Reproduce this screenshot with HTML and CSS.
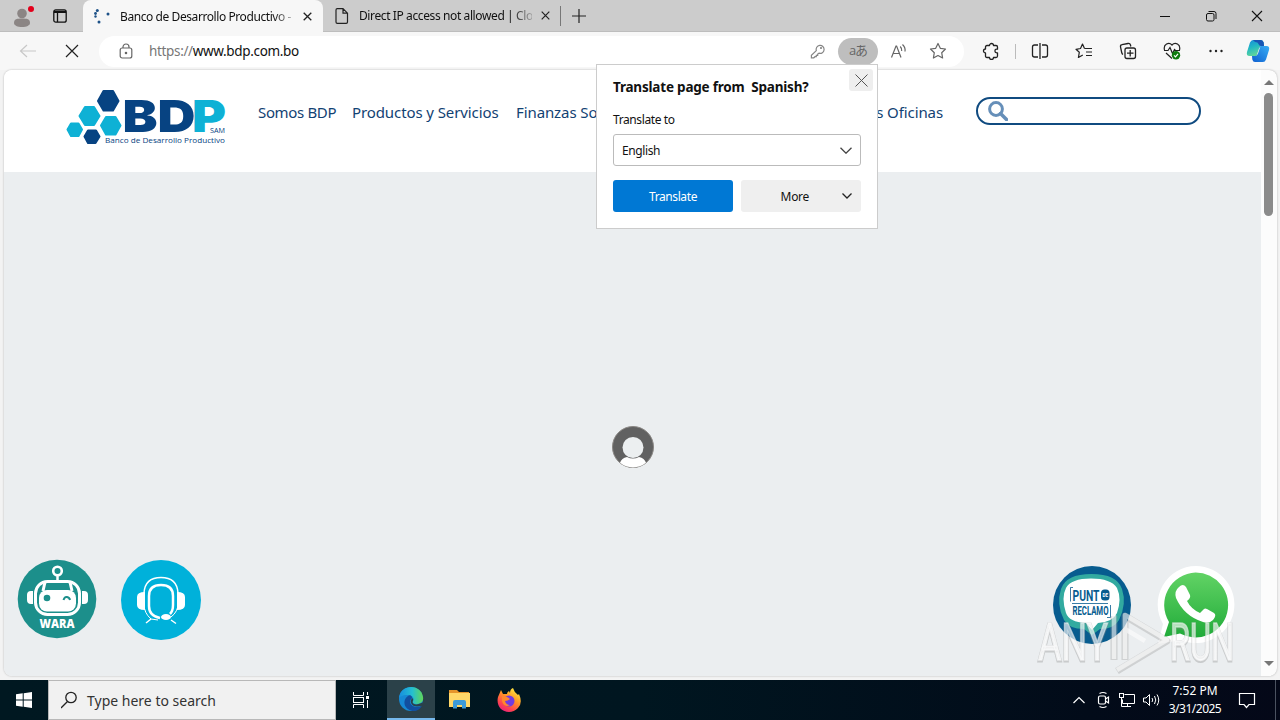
FILE: index.html
```html
<!DOCTYPE html>
<html lang="en">
<head>
<meta charset="utf-8">
<title>Banco de Desarrollo Productivo</title>
<link rel="stylesheet" href="styles.css">
</head>
<body>
<div class="desktop">
  <div class="tabstrip">
    <div class="tab-actions">
      <svg class="profile" width="26" height="28" viewBox="0 0 26 28"><circle cx="12" cy="12.500" r="4.800" fill="#8b8584"/><path d="M4 22c0-4 3-4.500 8-4.500s8 .5 8 4.500c0 2.500-3.500 4-8 4s-8-1.500-8-4z" fill="#8b8584"/><circle cx="21" cy="8" r="3" fill="#e3001b"/></svg>
      <svg width="14" height="14" viewBox="0 0 14 14" fill="none" stroke="#111" stroke-width="1.300"><rect x=".8" y=".8" width="12.400" height="12.400" rx="2"/><path d="M1 2.500h12M4.500 3v10" /><path d="M1 3h12" stroke-width="2"/></svg>
    </div>
    <div class="tab tab-active">
      <svg width="18" height="16" viewBox="0 0 18 16" fill="#1e5288"><circle cx="4.300" cy="2.500" r="1.500"/><circle cx="2.500" cy="5.500" r="1.400"/><circle cx="2.500" cy="8.500" r="1.200"/><circle cx="6" cy="14" r="1.500"/><circle cx="15" cy="6" r="1.500"/></svg>
      <span class="tab-title title-one">Banco de Desarrollo Productivo - </span>
      <svg class="tab-close" width="9" height="9" viewBox="0 0 9 9"><path d="M.7.700l7.600 7.600M8.300.700L.7 8.300" stroke="#222" stroke-width="1.300"/></svg>
    </div>
    <div class="tab">
      <svg width="14" height="16" viewBox="0 0 14 16" fill="none" stroke="#222" stroke-width="1.200"><path d="M1 2q0-1.300 1.300-1.300H8l4.500 4.500V14q0 1.300-1.300 1.300H2.300Q1 15.300 1 14zM8 .7v4.500h4.500"/></svg>
      <span class="tab-title title-two">Direct IP access not allowed | Clo</span>
      <svg class="tab-close" width="9" height="9" viewBox="0 0 9 9"><path d="M.7.700l7.600 7.600M8.300.700L.7 8.300" stroke="#222" stroke-width="1.200"/></svg>
    </div>
    <svg class="plus" width="14" height="14" viewBox="0 0 14 14"><path d="M7 0v14M0 7h14" stroke="#222" stroke-width="1.200"/></svg>
    <div class="window-buttons">
      <svg width="46" height="32" viewBox="0 0 46 32"><path d="M18 16.500h10" stroke="#111"/></svg>
      <svg width="46" height="32" viewBox="0 0 46 32" fill="none" stroke="#111"><rect x="18.500" y="13.500" width="7.500" height="7.500" rx="1.500"/><path d="M20.500 11.500H26q2 0 2 2V19"/></svg>
      <svg width="46" height="32" viewBox="0 0 46 32" stroke="#111" stroke-width="1.100"><path d="M18 11l10 10M28 11L18 21"/></svg>
    </div>
  </div>

  <div class="toolbar">
    <div class="tool"><svg width="18" height="14" viewBox="0 0 18 14" fill="none" stroke="#c8c8c8" stroke-width="1.200"><path d="M17 7H1.500M8 1L1.500 7 8 13"/></svg></div>
    <div class="tool"><svg width="14" height="14" viewBox="0 0 14 14" stroke="#222" stroke-width="1.200"><path d="M1 1l12 12M13 1L1 13"/></svg></div>
    <div class="address">
      <svg class="lock" width="14" height="16" viewBox="0 0 14 16" fill="none" stroke="#666" stroke-width="1.200"><rect x="1.200" y="5" width="11.600" height="10" rx="2"/><path d="M4 5V4a3 3 0 0 1 6 0v1"/><circle cx="7" cy="10" r=".7" fill="#666"/></svg>
      <span class="url"><span class="scheme">https://</span>www.bdp.com.bo</span>
      <div class="address-tools">
        <div class="mini"><svg width="16" height="16" viewBox="0 0 16 16" fill="none" stroke="#858585" stroke-width="1.200"><path d="M6.300 7.600A4 4 0 1 1 9 10.200L7.700 11v1.300H6.300v1.400H5L3.800 14.800H1.400v-2.500z"/><circle cx="11" cy="5" r=".5"/></svg></div>
        <div class="mini translate">aあ</div>
        <div class="mini"><svg width="18" height="16" viewBox="0 0 18 16" fill="none" stroke="#666" stroke-width="1.200"><path d="M2.500 14.500L7 3h.6L12 14.500M4 10.500h6.500M11.200 3.500q2 2 1.500 4.500M13.500 1.500q3.200 3 2.500 7"/></svg></div>
        <div class="mini"><svg width="18" height="18" viewBox="0 0 18 18" fill="none" stroke="#666" stroke-width="1.200" stroke-linejoin="round"><path d="M9 1.500l2.300 4.800 5.200.7-3.800 3.700.9 5.300L9 13.500 4.400 16l.9-5.300L1.500 7l5.200-.7z"/></svg></div>
      </div>
    </div>
    <div class="tool extension"><svg width="18" height="18" viewBox="0 0 18 18" fill="none" stroke="#222" stroke-width="1.300" stroke-linejoin="round"><path d="M5 3.500h2.500a2 2 0 0 1 4 0H14q1.500 0 1.500 1.500v2.200h-.8a1.800 1.800 0 0 0 0 3.600h.8V14q0 1.500-1.500 1.500h-2.500a2 2 0 0 1-4 0H5q-1.500 0-1.500-1.500v-3a2 2 0 0 1 0-4V5q0-1.500 1.500-1.500z"/></svg></div>
    <div class="divider"></div>
    <div class="tool"><svg width="18" height="16" viewBox="0 0 18 16" fill="none" stroke="#222" stroke-width="1.300"><path d="M7 2H3.500Q1.500 2 1.500 4v8q0 2 2 2H7M11 2h3.500q2 0 2 2v8q0 2-2 2H11M9 0v16"/></svg></div>
    <div class="tool"><svg width="18" height="16" viewBox="0 0 18 16" fill="none" stroke="#222" stroke-width="1.200" stroke-linejoin="round"><path d="M9.500 5.500L7.500 1 5.500 5.500l-4.500.8 3.300 3-.9 5.200L7.800 12M9.500 5.500H17M11 9h6M11 12.500h6"/></svg></div>
    <div class="tool"><svg width="18" height="18" viewBox="0 0 18 18" fill="none" stroke="#222" stroke-width="1.300"><path d="M4 12.500Q3 12 2.700 10.500L1.500 5q-.3-2 1.500-2.300l6-1.200q2-.3 2.500 1.500l.3 1.500"/><rect x="6" y="6" width="10.500" height="10.500" rx="2"/><path d="M11.200 8v6.500M8 11.200h6.500"/></svg></div>
    <div class="tool"><svg width="18" height="18" viewBox="0 0 18 18" fill="none" stroke="#222" stroke-width="1.200"><path d="M1.500 8C0 2 6-.5 9 3c3-3.500 9-1 7.500 5M1 8.500h4l2-3 2.500 6 2-4 1 1H17M3 11l6 5.500"/><circle cx="13" cy="13.300" r="4.200" fill="#0f7b0f" stroke="none"/><path d="M11 13.300l1.500 1.500 2.500-3" stroke="#fff"/></svg></div>
    <div class="tool"><svg width="16" height="4" viewBox="0 0 16 4" fill="#222"><circle cx="2.500" cy="2" r="1.200"/><circle cx="8" cy="2" r="1.200"/><circle cx="13.500" cy="2" r="1.200"/></svg></div>
    <div class="tool copilot"><svg width="26" height="24" viewBox="0 0 26 24"><defs><linearGradient id="ca" x1="0" y1="0" x2=".4" y2="1"><stop stop-color="#1689dc"/><stop offset=".5" stop-color="#22b8c3"/><stop offset="1" stop-color="#62d79a"/></linearGradient><linearGradient id="cb" x1="1" y1="0" x2="0" y2="1"><stop stop-color="#37aef5"/><stop offset="1" stop-color="#0f5fd0"/></linearGradient></defs><path d="M8 1h8q2 0 2.700 2.500L19 7h-2q-2 0-3 2.500L11.500 17H4.500Q1 17 2 13L5 3.500Q6 1 8 1z" fill="url(#ca)"/><path d="M18 23h-8q-2 0-2.700-2.500L7 17h3q2 0 3-2.500L15.500 7h6Q25 7 24 11l-3 9.500Q20 23 18 23z" fill="url(#cb)"/><path d="M8 1h8q2 0 2.700 2.500L19 7h-3q-2 0-2.500-2T10 3z" fill="#1855b4"/></svg></div>
  </div>

  <div class="viewport">
    <div class="page">
      <header class="site-header">
        <svg class="logo" width="162" height="58" viewBox="0 0 162 58">
          <g stroke-linejoin="round" stroke-width="2">
          <path d="M37.500 2h9.500l5.500 10L47 21.500H37.500L32 12z" fill="#074382" stroke="#074382"/>
          <path d="M19 18h9l5.500 9-5.500 9h-9l-5.500-9z" fill="#0eb1d5" stroke="#0eb1d5"/>
          <path d="M40 28h9.500l5 8.500-5 9H40l-5-9z" fill="#0eb1d5" stroke="#0eb1d5"/>
          <path d="M5 34.500h7.500l3.500 6-3.500 6.500H5l-3.500-6.500z" fill="#0eb1d5" stroke="#0eb1d5"/>
          <path d="M22 41.500h8l3.500 6-4 6.500H22l-3.500-6.500z" fill="#074382" stroke="#074382"/></g>
          <g class="logo-word"><text x="56.500" y="43" textLength="73" lengthAdjust="spacingAndGlyphs" fill="#074382">BD</text><text x="126" y="43" textLength="34" lengthAdjust="spacingAndGlyphs" fill="#0eb1d5">P</text></g>
          <text class="logo-small" x="144" y="43.500" textLength="15" lengthAdjust="spacingAndGlyphs">SAM</text>
          <text class="logo-sub" x="39" y="54" textLength="120" lengthAdjust="spacingAndGlyphs">Banco de Desarrollo Productivo</text>
        </svg>
        <nav class="site-nav"><span class="n1">Somos BDP</span><span class="n2">Productos y Servicios</span><span class="n3">Finanzas Sostenibles</span><span class="n4">Nuestras Oficinas</span></nav>
        <div class="site-search"><svg width="20" height="20" viewBox="0 0 20 20" fill="none" stroke="#668fb9"><circle cx="8" cy="8" r="6.400" stroke-width="3"/><path d="M12.500 12.500l6 6" stroke-width="3.500" stroke-linecap="round"/></svg></div>
      </header>
      <main class="content">
        <svg class="loader" width="44" height="44" viewBox="0 0 44 44"><circle cx="22" cy="22" r="20.500" fill="#616161" stroke="#8a8784"/><path d="M9 37.800Q10.500 33 16 32q6 3 12 0 5.500 1 7 5.800A20.500 20.500 0 0 1 9 37.800z" fill="#fff"/><circle cx="22" cy="22.500" r="10.500" fill="#eceff0"/></svg>
        <div class="badges">
          <svg class="wara" width="80" height="80" viewBox="0 0 80 80"><circle cx="40" cy="40" r="39.300" fill="#1c8f8b"/><g fill="none" stroke="#fff"><circle cx="40.500" cy="12" r="4.300" stroke-width="2.600"/><path d="M40.500 16v7" stroke-width="2.500"/><rect x="18.500" y="22.500" width="44" height="33" rx="12" stroke-width="3"/><path d="M28 23l-2 9M53 23l2 9" stroke-width="3"/></g><path d="M16 32v13h-2q-4 0-4-4v-5q0-4 4-4zM65 32v13h2q4 0 4-4v-5q0-4-4-4z" fill="#fff"/><rect x="22" y="31" width="37" height="21.500" rx="8" fill="#fff"/><circle cx="30" cy="39" r="3.300" fill="#1c8f8b"/><path d="M46.500 41q1-3.500 3.500-3t3 3" fill="none" stroke="#1c8f8b" stroke-width="2"/><text class="wara-text" x="22.500" y="69" textLength="35" lengthAdjust="spacingAndGlyphs">WARA</text></svg>
          <svg class="support" width="80" height="80" viewBox="0 0 80 80"><circle cx="40" cy="40" r="40" fill="#00b1da"/><g fill="none" stroke="#fff"><path d="M23 34v-1Q24 17.500 40 17.500T57 33v1" stroke-width="1.500"/><path d="M39 58Q28 56 28 46V36q0-11 12-11t12 11v9q0 6-3 9" stroke-width="2.500"/><path d="M23 34v10Q23 53 30 59l7 1M57.500 34v8q-.5 10-7.500 15" stroke-width="1"/><path d="M30 59l-5 4M50 60l5 3.500" stroke-width="1.500"/></g><path d="M24 32v18q-8 0-8-5v-8q0-5 8-5zM56 32v18q8 0 8-5v-8q0-5-8-5z" fill="#fff"/><ellipse cx="45" cy="57" rx="5" ry="3" fill="#fff"/></svg>
          <svg class="reclamo" width="80" height="80" viewBox="0 0 80 80"><circle cx="40" cy="40" r="39" fill="#075c8f"/><path d="M39.500 9Q14 9 9 24T12 55q5 9 20 9l8 6 8-6q14 0 19-9 8-16 3-31Q65 9 39.500 9z" fill="#32aaa0"/><path d="M39 13.500Q19 13.500 14 23t0 25q3 9 20 10l6 7 6-7q15-1 19-10 5-14 0-25-6-9.500-26-9.500z" fill="#fff"/><g class="reclamo-text"><text class="punt" x="20.500" y="36" textLength="27" lengthAdjust="spacingAndGlyphs">PUNT</text><text x="20.500" y="50" textLength="36" lengthAdjust="spacingAndGlyphs">RECLAMO</text></g><rect x="49" y="24.500" width="8.500" height="11" rx="3.500" fill="#075c8f"/><text class="de" x="50.500" y="32" textLength="5.500" lengthAdjust="spacingAndGlyphs">DE</text><path d="M21 22.500h-2.500v14M55 52.500h3.500V40M20 38.500h36" fill="none" stroke="#075c8f" stroke-width=".8"/></svg>
          <svg class="whatsapp" width="78" height="78" viewBox="0 0 78 78"><defs><linearGradient id="wg" x1="0" y1="0" x2="0" y2="1"><stop stop-color="#62d365"/><stop offset="1" stop-color="#20ab39"/></linearGradient></defs><path d="M39 0A38.500 38.500 0 1 1 24 74L1 78 6 58A38.500 38.500 0 0 1 39 0z" fill="#fff"/><path d="M38.500 6.500A32.500 32.500 0 1 1 23 67.500L7 71l5-15A32.500 32.500 0 0 1 38.500 6.500z" fill="url(#wg)"/><path d="M22 21q4-4 7 0l4 8q1 3-3 6 4 8 13 12l4-4q1-1 3 0l7 4q3 2-1 7-4 4-10 2Q27 50 19 32q-2-7 3-11z" fill="#fff"/></svg>
        </div>
        <svg class="watermark" width="204" height="70" viewBox="0 0 204 70"><g class="wm-text wm-shadow"><text x="4" y="53" textLength="70" lengthAdjust="spacingAndGlyphs">ANY</text><text x="136" y="53" textLength="64" lengthAdjust="spacingAndGlyphs">RUN</text></g><g class="wm-text"><text x="4" y="52" textLength="70" lengthAdjust="spacingAndGlyphs">ANY</text><text x="136" y="52" textLength="64" lengthAdjust="spacingAndGlyphs">RUN</text></g><g fill="none" stroke-linejoin="round"><path d="M80 8v44M91 52V8l42 25-50 30" stroke="#999" stroke-opacity=".4" stroke-width="7"/><path d="M80 7v44M91 51V7l42 25-50 30M91 21l20 12" stroke="#fff" stroke-opacity=".65" stroke-width="4.500"/></g></svg>
      </main>
    </div>
    <div class="scrollbar"><i class="arrow up"></i><i class="thumb"></i><i class="arrow down"></i></div>
  </div>

  <div class="taskbar">
    <div class="start"><svg width="16" height="16" viewBox="0 0 16 16" fill="#fff"><path d="M0 2.300L6.700 1.300v6.200H0zM7.700 1.200L16 0v7.500H7.700zM0 8.500h6.700v6.200L0 13.700zM7.700 8.500H16V16l-8.300-1.200z"/></svg></div>
    <div class="task-search"><svg width="18" height="18" viewBox="0 0 18 18" fill="none" stroke="#222" stroke-width="1.300"><circle cx="10" cy="6.500" r="5.200"/><path d="M6.500 10.500L0 17"/></svg><span>Type here to search</span></div>
    <div class="task"><svg width="18" height="16" viewBox="0 0 18 16" fill="none" stroke="#fff"><path d="M.5 0v3.500h10V0M.5 16v-3.500h10V16"/><rect x=".5" y="5.500" width="10" height="5"/><path d="M14.500 0v3M14.500 8v8"/><rect x="13.500" y="4.500" width="2" height="2" fill="#fff"/></svg></div>
    <div class="task task-active"><svg width="26" height="26" viewBox="0 0 26 26"><defs><linearGradient id="ea"><stop stop-color="#168de0"/><stop offset=".55" stop-color="#25bfd0"/><stop offset="1" stop-color="#61d657"/></linearGradient></defs><circle cx="13" cy="13" r="12" fill="#1688d4"/><path d="M1 12C2-2 23-3 25 11c1 5-3 7-7 7-3 0-4-1-3-3 2-4-2-6-6-6-5 0-7 2-8 3z" fill="url(#ea)"/><path d="M10 10c-7 5-3 15 6 15 3 0 6-2 8-5-5 2-11 1-12-4 0-3 2-3 2-5-1-2-3-2-4-1z" fill="#124f9f"/><path d="M14 12c2 1 1 3 .6 4 0 2 3 3 6 2l4-1.500v3q-9 3-11.600-2.500-1-2 1-5z" fill="#2b4149"/></svg></div>
    <div class="task"><svg width="24" height="22" viewBox="0 0 24 22"><path d="M1 1h8l2 2h10v4H1z" fill="#e5942b"/><path d="M1 4h21v14H1z" fill="#ffd768"/><path d="M5 19.500V13q0-2 2-2h9q2 0 2 2v6.500h-4V16H9v3.500z" fill="#3b9ad9"/></svg></div>
    <div class="task"><svg width="26" height="26" viewBox="0 0 26 26"><defs><linearGradient id="ff" x1=".8" y1="0" x2=".2" y2="1"><stop stop-color="#fff044"/><stop offset=".4" stop-color="#ff9825"/><stop offset=".75" stop-color="#ff434f"/><stop offset="1" stop-color="#e51c83"/></linearGradient></defs><path d="M5 3l2 4 4 0q0-2 2-3l1 2Q14 2 17 1q1 4 5 7l1-1q4 9-1 14-4 4-9 4C5 25 0 18 2 10l3-7z" fill="url(#ff)"/><circle cx="13" cy="14" r="5.500" fill="#713be0"/><path d="M6 9q5 0 8 3-2 2-5 2 1 4 5 4-6 3-8-4z" fill="#ff872d"/></svg></div>
    <div class="tray">
      <svg width="24" height="24" viewBox="0 0 24 24" fill="none" stroke="#fff" stroke-width="1.200"><path d="M6.500 15L12 9.500l5.500 5.500"/></svg>
      <svg width="24" height="24" viewBox="0 0 24 24" fill="none" stroke="#fff" stroke-width="1.200"><rect x="7.500" y="8" width="7" height="8" rx="1.500"/><path d="M14.500 11l3-2v6l-3-2M8.500 5.500q3.500-2 7 0M8.500 18.500q3.500 2 7 0"/></svg>
      <svg width="24" height="24" viewBox="0 0 24 24" fill="none" stroke="#fff"><path d="M9.500 6.500h10v9h-12v-4M12.500 15.500v3M9 18.500h7"/><rect x="4.500" y="5.500" width="4" height="4"/><path d="M6.500 9.500v9h3"/></svg>
      <svg width="24" height="24" viewBox="0 0 24 24" fill="none" stroke="#fff"><path d="M4.500 10v4h2.500l3.500 3.500v-11L7 10zM13 10q1.500 2 0 4M15.500 8q2.500 4 0 8M18 6.500q3.500 5.500 0 11"/></svg>
      <div class="clock"><span class="time">7:52 PM</span><span class="date">3/31/2025</span></div>
      <svg class="notice" width="18" height="18" viewBox="0 0 18 18" fill="none" stroke="#fff" stroke-width="1.200"><path d="M1.500 2.500h15v11H11l-2.500 3-2.500-3H1.500z"/></svg>
      <i class="peek"></i>
    </div>
  </div>

  <div class="popup">
    <div class="popup-head"><strong>Translate page from&nbsp; Spanish?</strong><div class="popup-close"><svg width="13" height="13" viewBox="0 0 13 13" stroke="#555"><path d="M.5.500l12 12M12.500.500l-12 12"/></svg></div></div>
    <div class="label">Translate to</div>
    <div class="select"><span>English</span><svg width="12" height="7" viewBox="0 0 12 7" fill="none" stroke="#444" stroke-width="1.300"><path d="M.5.700L6 6.200 11.500.700"/></svg></div>
    <div class="popup-buttons"><div class="primary">Translate</div><div class="more"><span>More</span><svg width="10" height="6" viewBox="0 0 10 6" fill="none" stroke="#222" stroke-width="1.300"><path d="M.5.500L5 5 9.500.500"/></svg></div></div>
  </div>
</div>
</body>
</html>
```
FILE: styles.css
```css
* { box-sizing: border-box; }
body { margin: 0; overflow: hidden; font-family: "Noto Sans", "Noto Sans CJK JP", sans-serif; font-size: 12px; color: #111; }
svg { display: block; flex: none; }
.desktop { position: relative; width: 1280px; height: 720px; display: flex; flex-direction: column; background: #f3f3f3; overflow: hidden; }

.tabstrip { height: 32px; flex: none; display: flex; align-items: center; background: #ccc; border-bottom: 1px solid #bdbdbd; }
.tab-actions { width: 83px; height: 100%; display: flex; align-items: center; padding-left: 10px; gap: 17px; }
.profile { margin-top: -1px; }
.tab { width: 238px; height: 32px; display: flex; align-items: center; padding-left: 12px; border-right: 1px solid #777; }
.tab:not(.tab-active) { height: 20px; }
.tab-active { width: 240px; padding-left: 10px; background: #f7f7f7; border-right: 0; border-radius: 8px 8px 0 0; align-self: flex-start; }
.tab-title { white-space: nowrap; width: 174px; margin-left: 9px; letter-spacing: -.42px; -webkit-mask-image: linear-gradient(90deg, #000 88%, #0003); }
.title-two { margin-left: 10px; width: 173px; letter-spacing: -.39px; }
.tab-close { margin-left: 9px; }
.plus { margin-left: 11px; }
.window-buttons { margin-left: auto; display: flex; }

.toolbar { height: 38px; flex: none; display: flex; align-items: center; padding-left: 6px; background: #f7f7f7; }
.tool { width: 44px; height: 36px; display: flex; align-items: center; justify-content: center; }
.copilot { width: 40px; }
.divider { width: 1px; height: 15px; margin: 0 2px; background: #bbb; }
.address { width: 865px; height: 31px; margin: 0 5px; border-radius: 16px; background: #fff; display: flex; align-items: center; padding: 0 6px 0 20px; }
.url { margin-left: 16px; font-size: 13.500px; letter-spacing: -.34px; }
.scheme { color: #777; }
.address-tools { display: flex; margin-left: auto; }
.mini { width: 40px; height: 27px; display: flex; align-items: center; justify-content: center; }
.translate { background: #bebebe; border-radius: 14px; color: #666; font-size: 13px; letter-spacing: -1px; line-height: 16px; padding-bottom: 2px; font-family: "Open Sans", "Noto Sans CJK JP", sans-serif; }

.viewport { height: 606px; width: 1273px; margin-left: 4px; flex: none; display: flex; border-radius: 8px; overflow: hidden; background: #fcfcfc; box-shadow: 0 0 2px #aaa; }
.page { width: 1257px; display: flex; flex-direction: column; }
.site-header { height: 102px; flex: none; display: flex; background: #fff; }
.logo { margin: 19px 0 0 62px; }
.logo-word { font: 900 44px Inter, sans-serif; }
.logo-small { font: 6.500px "Open Sans", sans-serif; fill: #074382; }
.logo-sub { font: 8px "Open Sans", sans-serif; fill: #074382; }
.site-nav { width: 685px; margin: 31px 0 0 30px; height: 22px; display: flex; gap: 16px; white-space: nowrap; font-size: 15px; line-height: 22px; letter-spacing: -.1px; color: #124273; }
.n1 { width: 78px; letter-spacing: -.35px; }
.n2 { width: 148px; }
.n4 { margin-left: auto; }
.site-search { width: 225px; height: 28px; margin: 27px 0 0 33px; border: 2px solid #104b80; border-radius: 14px; padding: 2px 10px; }
.content { position: relative; flex: 1; background: #ebeef0; }
.loader { position: absolute; left: 607px; top: 253px; }
.badges svg { position: absolute; }
.badges .wara { left: 13px; top: 387px; }
.badges .support { left: 117px; top: 388px; }
.badges .reclamo { left: 1048px; top: 393px; }
.badges .whatsapp { left: 1153px; top: 394px; }
.wara-text { font: 800 12px "Open Sans", sans-serif; fill: #fff; }
.reclamo-text { font: bold 12.500px Roboto, sans-serif; fill: #075c8f; }
.punt { font-size: 15.500px; }
.de { font: bold 5px Roboto, sans-serif; fill: #fff; }
.watermark { position: absolute; left: 1030px; top: 436px; opacity: .85; }
.wm-text { font: 52px Roboto, sans-serif; fill: #fff; fill-opacity: .75; stroke: #fff; stroke-opacity: .6; stroke-width: 1.500; }
.wm-shadow { fill: none; stroke: #888; stroke-opacity: .4; stroke-width: 3; }
.scrollbar { width: 15px; display: flex; flex-direction: column; align-items: center; padding: 10px 0 10px; }
.arrow { border: 5px solid transparent; height: 0; }
.up { border-top: 0; border-bottom-color: #777; }
.thumb { width: 9px; height: 123px; border-radius: 5px; background: #8b8b8b; margin-top: 8px; }
.down { border-bottom: 0; border-top-color: #777; margin-top: auto; }

.taskbar { height: 40px; flex: none; margin-top: 4px; display: flex; background: linear-gradient(90deg, #001821, #001620 50%, #020b19 85%, #040818); color: #fff; }
.start { width: 48px; display: flex; align-items: center; justify-content: center; }
.task-search { width: 288px; display: flex; align-items: center; padding-left: 12px; gap: 8px; border: 1px solid #b8b8b8; background: #f1f1f1; color: #333; font-size: 14px; }
.task { width: 49px; display: flex; align-items: center; justify-content: center; }
.task:nth-child(3) { width: 51px; }
.task-active { width: 48px; background: #2b4149; border-bottom: 2px solid #76b9ed; }
.tray { margin-left: auto; width: 213px; display: flex; align-items: center; }
.clock { width: 64px; display: flex; flex-direction: column; align-items: center; line-height: 18px; margin-bottom: 1px; }
.date { letter-spacing: -.5px; }
.notice { margin-left: 11px; }
.peek { width: 1px; height: 40px; margin-left: 19px; background: #4b5260; }

.popup { position: absolute; left: 596px; top: 64px; width: 282px; height: 165px; background: #fff; border: 1px solid #ccc; padding: 4px 16px 0; }
.popup-head { height: 38px; display: flex; justify-content: space-between; align-items: flex-start; }
.popup-head strong { font-size: 13.500px; line-height: 20px; margin-top: 8px; white-space: nowrap; letter-spacing: -.2px; }
.popup-close { width: 24px; height: 22px; margin-right: -12px; background: #eee; border-radius: 3px; display: flex; align-items: center; justify-content: center; }
.label { height: 27px; line-height: 26px; letter-spacing: -.4px; }
.select { height: 32px; display: flex; align-items: center; justify-content: space-between; padding: 0 8px; border: 1px solid #bbb; border-radius: 3px; letter-spacing: -.4px; }
.popup-buttons { display: flex; gap: 8px; margin-top: 14px; }
.primary, .more { width: 120px; height: 32px; border-radius: 3px; display: flex; align-items: center; justify-content: center; letter-spacing: -.4px; }
.primary { background: #0078d4; color: #fff; }
.more { background: #efefef; justify-content: flex-end; padding-right: 9px; gap: 33px; letter-spacing: -.3px; }
```
